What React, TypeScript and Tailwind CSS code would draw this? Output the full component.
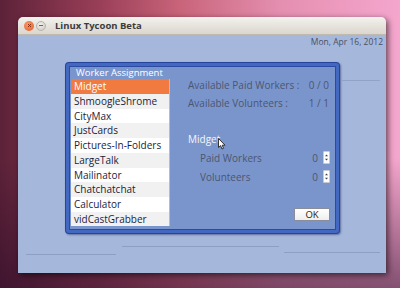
import React from "react";

const items = [
  "Midget",
  "ShmoogleShrome",
  "CityMax",
  "JustCards",
  "Pictures-In-Folders",
  "LargeTalk",
  "Mailinator",
  "Chatchatchat",
  "Calculator",
  "vidCastGrabber",
];

function Spinner() {
  return (
    <div className="w-[7px] h-[13px] bg-white border border-[#c8cbd4] rounded-[1px] flex items-center justify-center">
      <svg width="5" height="9" viewBox="0 0 5 9">
        <path d="M2.5 1.5 L4 3.3 L1 3.3 Z" fill="#444" />
        <path d="M2.5 7.5 L4 5.7 L1 5.7 Z" fill="#444" />
      </svg>
    </div>
  );
}

export default function App() {
  return (
    <div className="relative w-[400px] h-[288px] overflow-hidden font-['Open_Sans',sans-serif] bg-[linear-gradient(90deg,#5c2238_0%,#9a3f58_25%,#c9647a_45%,#e48fb0_70%,#f5a6cd_100%)]">
      <div className="absolute inset-0 bg-[linear-gradient(180deg,rgba(0,0,0,0)_0%,rgba(0,0,0,0)_55%,rgba(40,10,40,0.55)_100%)]" />
      {/* window */}
      <div className="absolute left-[18px] top-[17px] w-[368px] h-[256px] rounded-t-[5px] shadow-[2px_2px_6px_rgba(0,0,0,0.6)] flex flex-col overflow-hidden">
        <div className="h-[18px] bg-[linear-gradient(180deg,#f3f2ed,#dbd6ce)] flex items-center pl-[6px] border-b border-[#bfbab0]">
          <div className="w-[10px] h-[10px] rounded-full bg-[radial-gradient(circle_at_40%_35%,#f79a6c,#e25a28)] flex items-center justify-center">
            <svg width="5" height="5" viewBox="0 0 5 5">
              <path d="M1 1 L4 4 M4 1 L1 4" stroke="#8a3210" strokeWidth="1" />
            </svg>
          </div>
          <div className="w-[10px] h-[10px] rounded-full ml-[2px] bg-[radial-gradient(circle_at_40%_35%,#f4f2ee,#c9c5bd)] border border-[#b8b4ac] flex items-center justify-center">
            <div className="w-[4px] h-[1px] bg-[#6a6660]" />
          </div>
          <div className="ml-[9px] text-[9.5px] font-bold text-[#3c3c3c] leading-none">
            Linux Tycoon Beta
          </div>
        </div>
        <div className="relative flex-1 bg-[#a5b8dc]">
          <div className="absolute right-[3px] top-[1px] text-[8.5px] leading-[12px] text-[#4a4f63]">
            Mon, Apr 16, 2012
          </div>
          {/* faint lines */}
          <div className="absolute left-[324px] top-[45px] w-[38px] h-[1px] bg-[#93a3c8]" />
          <div className="absolute left-[104px] top-[211px] w-[157px] h-[1px] bg-[#8e9ec4]" />
          <div className="absolute left-[266px] top-[217px] w-[96px] h-[1px] bg-[#8e9ec4]" />
          <div className="absolute left-[8px] top-[219px] w-[90px] h-[1px] bg-[#8e9ec4]" />

          {/* dialog */}
          <div className="absolute left-[47px] top-[27px] w-[275px] h-[172px] rounded-[4px] bg-[#26449a] p-[1px] shadow-[1px_1px_2px_rgba(30,40,90,0.5)]">
            <div className="w-full h-full rounded-[3px] bg-[#4368c2] p-[3px]">
              <div className="w-full h-full border border-[#2b4aa0] bg-[#7a95cc] flex flex-col">
                <div className="h-[12px] pl-[6px] text-[9.5px] leading-[12px] text-white">
                  Worker Assignment
                </div>
                <div className="flex flex-1 min-h-0 pb-[1px]">
                  <div className="ml-[1px] w-[99px] h-[147px] overflow-hidden bg-white border-r border-[#b9bcc6]">
                    {items.map((it, i) => (
                      <div
                        key={it}
                        className={
                          "h-[14.78px] pl-[3px] text-[10px] leading-[14.78px] whitespace-nowrap " +
                          (i === 0
                            ? "bg-[#f07a40] text-white"
                            : i % 2 === 1
                            ? "bg-[#f1f1f1] text-[#1c1c3c]"
                            : "bg-white text-[#1c1c3c]")
                        }
                      >
                        {it}
                      </div>
                    ))}
                  </div>
                  <div className="flex-1 pl-[18px] pr-[5px] flex flex-col text-[10px] text-[#4c5670]">
                    <div className="h-[12px] leading-[12px] flex justify-between pr-[1px]">
                      <span>Available Paid Workers :</span>
                      <span>0 / 0</span>
                    </div>
                    <div className="h-[12px] leading-[12px] mt-[6px] flex justify-between pr-[1px]">
                      <span>Available Volunteers :</span>
                      <span>1 / 1</span>
                    </div>
                    <div className="relative h-[12px] leading-[12px] mt-[24px] text-[#f4f5fb]">
                      Midget
                      <svg
                        className="absolute left-[30px] top-[5px]"
                        width="8"
                        height="12"
                        viewBox="0 0 8 12"
                      >
                        <path
                          d="M0.5 0.5 L0.5 9.5 L2.6 7.6 L4 11 L5.5 10.3 L4.2 7.2 L7 7.2 Z"
                          fill="#ffffff"
                          stroke="#222"
                          strokeWidth="0.9"
                          strokeLinejoin="round"
                        />
                      </svg>
                    </div>
                    <div className="h-[13px] mt-[6px] flex items-center pl-[12px]">
                      <span className="flex-1 leading-[12px]">Paid Workers</span>
                      <span className="leading-[12px]">0</span>
                      <div className="ml-[5px]">
                        <Spinner />
                      </div>
                    </div>
                    <div className="h-[13px] mt-[6px] flex items-center pl-[12px]">
                      <span className="flex-1 leading-[12px]">Volunteers</span>
                      <span className="leading-[12px]">0</span>
                      <div className="ml-[5px]">
                        <Spinner />
                      </div>
                    </div>
                    <div className="mt-[25px] flex justify-end">
                      <div className="w-[36px] h-[13px] bg-[linear-gradient(180deg,#ffffff,#eeeeee)] border border-[#8a8e9a] rounded-[1px] text-[9.5px] leading-[11px] text-center text-[#222]">
                        OK
                      </div>
                    </div>
                  </div>
                </div>
              </div>
            </div>
          </div>
        </div>
      </div>
    </div>
  );
}
